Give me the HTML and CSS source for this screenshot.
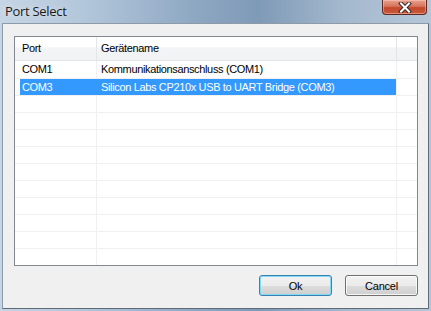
FILE: index.html
```html
<!DOCTYPE html>
<html>
	<head>
		<meta charset="UTF-8">
		<title>Port Select</title>
		<link rel="stylesheet" href="styles.css">
	</head>
	<body>
		<div class="window">
			<div class="titlebar">
				<span class="title">Port Select</span>
				<div class="close">
					<svg width="14" height="11" viewBox="0 0 14 11">
						<path d="M3 1.5 L11 9.5 M11 1.5 L3 9.5" stroke="#3a2a2a" stroke-width="4" stroke-linecap="square"/>
						<path d="M3 1.5 L11 9.5 M11 1.5 L3 9.5" stroke="#fff" stroke-width="2" stroke-linecap="square"/>
					</svg>
				</div>
			</div>
			<div class="client">
				<div class="list">
					<div class="row head">
						<div class="c1">Port</div>
						<div class="c2">Gerätename</div>
						<div class="c3"></div>
					</div>
					<div class="row first">
						<div class="c1">COM1</div>
						<div class="c2">Kommunikationsanschluss (COM1)</div>
						<div class="c3"></div>
					</div>
					<div class="row sel">
						<div class="c1">COM3</div>
						<div class="c2">Silicon Labs CP210x USB to UART Bridge (COM3)</div>
						<div class="c3"></div>
					</div>
					<div class="row"><div class="c1"></div><div class="c2"></div><div class="c3"></div></div>
					<div class="row"><div class="c1"></div><div class="c2"></div><div class="c3"></div></div>
					<div class="row"><div class="c1"></div><div class="c2"></div><div class="c3"></div></div>
					<div class="row"><div class="c1"></div><div class="c2"></div><div class="c3"></div></div>
					<div class="row"><div class="c1"></div><div class="c2"></div><div class="c3"></div></div>
					<div class="row"><div class="c1"></div><div class="c2"></div><div class="c3"></div></div>
					<div class="row"><div class="c1"></div><div class="c2"></div><div class="c3"></div></div>
					<div class="row"><div class="c1"></div><div class="c2"></div><div class="c3"></div></div>
					<div class="row"><div class="c1"></div><div class="c2"></div><div class="c3"></div></div>
					<div class="row"><div class="c1"></div><div class="c2"></div><div class="c3"></div></div>
				</div>
				<div class="buttons">
					<button class="btn default">Ok</button>
					<button class="btn">Cancel</button>
				</div>
			</div>
		</div>
	</body>
</html>
```

FILE: styles.css
```css
body{
	margin: 0;
	font-family: "Liberation Sans", Arial, sans-serif;
	font-size: 11px;
	letter-spacing: -0.35px;
	color: #000;
}
.window{
	width: 431px;
	height: 311px;
	box-sizing: border-box;
	padding: 0 2px 2px 2px;
	background: linear-gradient(to right, #c6d5e5 0%, #b2c6da 20%, #8ea8c3 45%, #7f9ab7 60%, #a5b9ce 80%, #b5c6d8 100%);
}
.titlebar{
	height: 23px;
	position: relative;
}
.title{
	position: absolute;
	left: 3px;
	top: 2px;
	font-family: "Open Sans", "Noto Sans", sans-serif;
	font-size: 13px;
	letter-spacing: -0.3px;
	color: #1a1a1a;
	text-shadow: 0 0 6px rgba(255,255,255,0.7);
}
.close{
	position: absolute;
	left: 380px;
	top: 0;
	width: 45px;
	height: 15px;
	box-sizing: border-box;
	border: 1px solid #5b2a22;
	border-top: none;
	border-radius: 0 0 4px 4px;
	background: linear-gradient(#e9a28f 0%, #d8735c 45%, #c4462c 55%, #c95a3a 100%);
	box-shadow: inset 0 0 0 1px rgba(255,210,200,0.45);
	display: flex;
	justify-content: center;
	align-items: center;
}
.client{
	height: 286px;
	box-sizing: border-box;
	background: #f0f0f0;
	border: 1px solid #5f6b77;
	border-top-color: #8e9aa7;
	border-left-color: #8e9aa7;
	padding: 12px 0 0 11px;
}
.list{
	width: 404px;
	height: 230px;
	box-sizing: border-box;
	border: 1px solid #828790;
	background: #fff;
	overflow: hidden;
}
.row{
	display: flex;
	height: 17px;
	box-sizing: border-box;
	border-bottom: 1px solid #f0f0f0;
	line-height: 16px;
}
.row.first{
	height: 18px;
	line-height: 17px;
}
.row.head{
	height: 24px;
	line-height: 23px;
	border-bottom: 1px solid #e3e4e6;
	background: linear-gradient(#ffffff 0%, #ffffff 45%, #f3f4f6 46%, #f1f2f4 100%);
}
.c1,.c2,.c3{
	box-sizing: border-box;
	border-right: 1px solid #f0f0f0;
	white-space: nowrap;
	overflow: hidden;
}
.c1{
	width: 82px;
	padding-left: 7px;
}
.c2{
	width: 300px;
	padding-left: 4px;
}
.c3{
	width: 20px;
	border-right: none;
}
.head .c1,.head .c2{
	border-right-color: #e4e5e7;
}
.sel{
	color: #fff;
}
.sel .c1{
	background: linear-gradient(to right, transparent 5px, #3399ff 5px);
	border-right-color: #3399ff;
}
.sel .c2{
	background: #3399ff;
}
.buttons{
	display: flex;
	justify-content: flex-end;
	gap: 13px;
	margin-top: 9px;
	padding-right: 10px;
}
.btn{
	width: 73px;
	height: 21px;
	padding: 0;
	font-family: "Liberation Sans", Arial, sans-serif;
	font-size: 11px;
	letter-spacing: -0.2px;
	color: #000;
	border: 1px solid #707070;
	border-radius: 3px;
	background: linear-gradient(#f2f2f2 0%, #ebebeb 50%, #dddddd 51%, #cfcfcf 100%);
	box-shadow: inset 0 0 0 1px rgba(255,255,255,0.8);
}
.btn.default{
	border-color: #3c7fb1;
	box-shadow: inset 0 0 0 1px #7fdcf7;
}
```
